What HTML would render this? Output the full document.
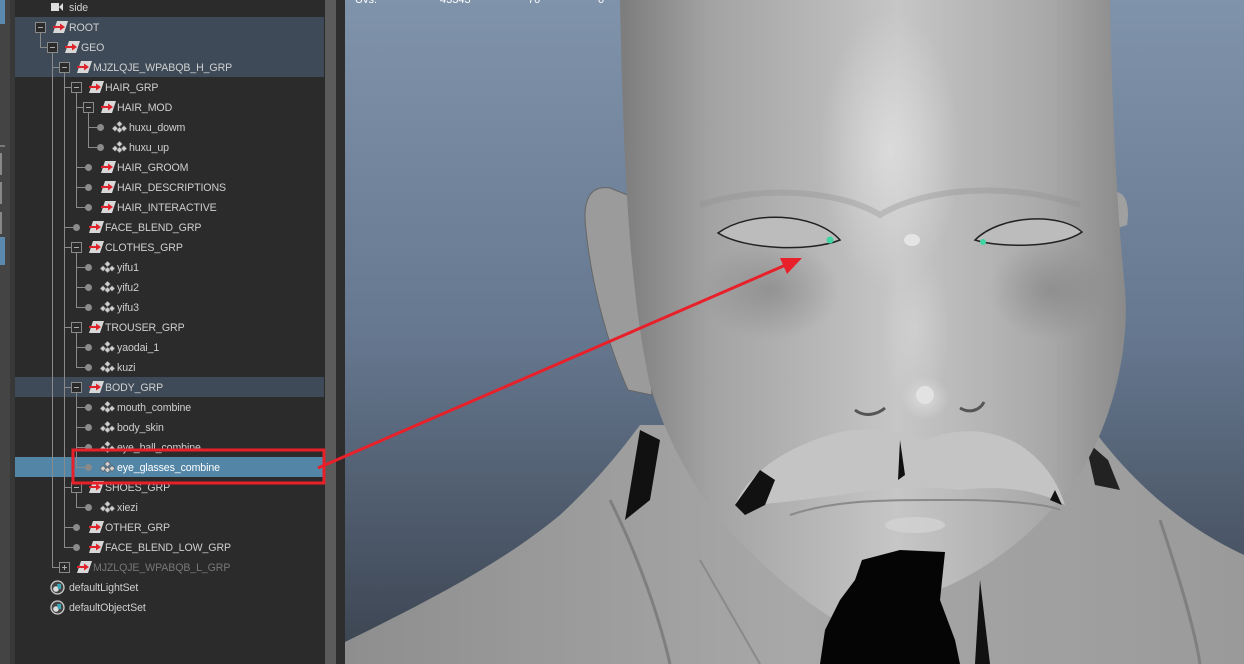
<!DOCTYPE html>
<html><head><meta charset="utf-8">
<style>
*{margin:0;padding:0;box-sizing:border-box}
body{width:1244px;height:664px;overflow:hidden;background:#2b2b2b;font-family:"Liberation Sans",sans-serif;position:relative}
#tb{position:absolute;left:0;top:0;width:10px;height:664px;background:#444}
#tb2{position:absolute;left:10px;top:0;width:5px;height:664px;background:#383838}
#ol{position:absolute;left:15px;top:0;width:310px;height:664px;background:#2b2b2b}
#sb{position:absolute;left:325px;top:0;width:11px;height:664px;background:#5b5b5b}
#sb2{position:absolute;left:336px;top:0;width:9px;height:664px;background:#2e2e2e}
.hl{position:absolute;left:15px;width:309px;background:#3e4a58}
.row{position:absolute;height:20px;line-height:20px;font-size:10.6px;letter-spacing:-0.1px;color:#cfcfcf;white-space:nowrap}
.ln{position:absolute;background:#8a8a8a}
.bx{position:absolute;width:11px;height:11px;border:1px solid #8a8a8a;background:#2b2b2b;z-index:2}
#vp{position:absolute;left:345px;top:0;width:899px;height:664px;overflow:hidden}
</style></head><body>
<div id="tb"></div><div id="tb2"></div>
<div style="position:absolute;left:0;top:0;width:5px;height:24px;background:#5a8ab0"></div>
<div style="position:absolute;left:0;top:145px;width:5px;height:2px;background:#777"></div>
<div style="position:absolute;left:0;top:153px;width:2px;height:22px;background:#888"></div>
<div style="position:absolute;left:0;top:182px;width:2px;height:22px;background:#888"></div>
<div style="position:absolute;left:0;top:212px;width:2px;height:22px;background:#888"></div>
<div style="position:absolute;left:0;top:237px;width:5px;height:28px;background:#5a8ab0"></div>
<div id="ol"></div>
<div class="hl" style="top:17px;height:60px"></div>
<div class="hl" style="top:377px;height:20px"></div>
<div class="hl" style="top:457px;height:20px;background:#5285a6"></div>
<div id="sb"></div><div id="sb2"></div>
<div id="tree"></div>
<div id="vp">
<svg width="899" height="664" viewBox="345 0 899 664" xmlns="http://www.w3.org/2000/svg">
<defs>
<linearGradient id="bg" x1="0" y1="0" x2="0" y2="1"><stop offset="0" stop-color="#7f93ab"/><stop offset="0.5" stop-color="#667890"/><stop offset="1" stop-color="#3b434f"/></linearGradient>
<linearGradient id="fc" x1="0" y1="0" x2="1" y2="0"><stop offset="0" stop-color="#7c7c7c"/><stop offset="0.18" stop-color="#a3a3a3"/><stop offset="0.55" stop-color="#c6c6c6"/><stop offset="0.85" stop-color="#a8a8a8"/><stop offset="1" stop-color="#8a8a8a"/></linearGradient>
<linearGradient id="ct" x1="0" y1="0" x2="1" y2="0"><stop offset="0" stop-color="#8e8e8e"/><stop offset="0.5" stop-color="#a8a8a8"/><stop offset="1" stop-color="#9a9a9a"/></linearGradient>
<radialGradient id="hi" cx="0.5" cy="0.5" r="0.5"><stop offset="0" stop-color="#e0e0e0" stop-opacity="0.8"/><stop offset="1" stop-color="#e0e0e0" stop-opacity="0"/></radialGradient>
<radialGradient id="sh" cx="0.5" cy="0.5" r="0.5"><stop offset="0" stop-color="#777" stop-opacity="0.5"/><stop offset="1" stop-color="#777" stop-opacity="0"/></radialGradient>
</defs>
<rect x="345" y="0" width="899" height="664" fill="url(#bg)"/>
<text x="355" y="3" font-size="11" fill="#fff" font-family="Liberation Sans">Uvs:</text>
<text x="440" y="3" font-size="11" fill="#fff" font-family="Liberation Sans">43343</text>
<text x="528" y="3" font-size="11" fill="#fff" font-family="Liberation Sans">70</text>
<text x="598" y="3" font-size="11" fill="#fff" font-family="Liberation Sans">0</text>
<path d="M345,664 L345,642 C420,605 500,565 560,515 C600,478 625,445 640,425 L1090,425 C1130,480 1180,525 1244,555 L1244,664 Z" fill="url(#ct)"/>
<path d="M640,430 L660,440 L650,500 L625,520 Z" fill="#111"/>
<path d="M1085,440 L1108,460 L1120,490 L1095,485 Z" fill="#222"/>
<path d="M610,500 C640,560 660,620 670,664" stroke="#7f7f7f" stroke-width="3" fill="none"/>
<path d="M1160,520 C1180,580 1195,630 1200,664" stroke="#808080" stroke-width="3" fill="none"/>
<path d="M700,560 L760,664" stroke="#8a8a8a" stroke-width="2" fill="none"/>
<path d="M610,188 C590,185 582,200 586,230 C592,290 610,350 628,390 L652,395 L640,200 Z" fill="#9b9b9b" stroke="#666" stroke-width="1"/>
<path d="M1112,192 C1126,190 1130,205 1127,225 L1112,230 Z" fill="#a0a0a0"/>
<path d="M620,0 L1110,0 C1112,100 1116,200 1125,290 C1130,350 1112,420 1082,470 C1050,520 1000,562 950,585 C915,600 875,612 835,620 C795,595 755,560 718,518 C682,470 662,425 650,385 C632,300 624,200 620,0 Z" fill="url(#fc)"/>
<ellipse cx="890" cy="150" rx="70" ry="140" fill="url(#hi)"/>
<ellipse cx="770" cy="290" rx="70" ry="50" fill="url(#sh)"/>
<ellipse cx="1050" cy="290" rx="60" ry="50" fill="url(#sh)"/>
<path d="M700,205 C760,185 840,190 880,215 C920,190 1000,180 1080,205" stroke="#8e8e8e" stroke-width="6" fill="none" opacity="0.35"/>
<path d="M718,233 C750,210 815,212 840,240 C810,252 745,250 718,233 Z" fill="#bcbcbc" stroke="#222" stroke-width="1.5"/>
<path d="M975,240 C1000,215 1060,212 1082,232 C1060,248 1000,248 975,240 Z" fill="#bcbcbc" stroke="#222" stroke-width="1.5"/>
<circle cx="830" cy="240" r="3.5" fill="#3fd6a2"/>
<circle cx="983" cy="242" r="3" fill="#3fd6a2"/>
<ellipse cx="912" cy="240" rx="8" ry="6" fill="#e4e4e4"/>
<ellipse cx="915" cy="330" rx="35" ry="80" fill="url(#hi)" opacity="0.5"/>
<ellipse cx="925" cy="398" rx="24" ry="22" fill="url(#hi)"/>
<ellipse cx="925" cy="395" rx="9" ry="9" fill="#e2e2e2"/>
<path d="M855,410 C865,418 878,414 885,408" stroke="#555" stroke-width="3" fill="none"/>
<path d="M960,408 C970,414 980,410 984,402" stroke="#555" stroke-width="3" fill="none"/>
<path d="M735,505 C750,470 790,445 840,432 C880,425 910,435 925,440 C950,430 985,425 1020,445 C1050,465 1060,490 1065,505 C1040,490 1000,485 960,490 C920,485 880,488 840,495 C800,500 770,505 735,505 Z" fill="#c4c4c4"/>
<path d="M735,505 L760,470 L775,480 L765,505 L745,515 Z" fill="#111"/>
<path d="M900,440 L905,475 L898,480 Z" fill="#111"/>
<path d="M1055,490 L1062,505 L1050,500 Z" fill="#111"/>
<path d="M790,515 C840,498 900,500 960,500 C1010,500 1050,505 1060,510" stroke="#8a8a8a" stroke-width="2" fill="none"/>
<ellipse cx="915" cy="525" rx="30" ry="8" fill="#d4d4d4" opacity="0.7"/>
<path d="M862,560 L900,550 L945,552 L940,600 L955,640 L960,664 L820,664 L825,630 L840,600 L855,580 Z" fill="#050505"/>
<path d="M980,580 L990,664 L975,664 Z" fill="#111"/>
</svg>
</div>
<svg style="position:absolute;left:0;top:0;z-index:5" width="1244" height="664">
<line x1="318" y1="468" x2="788" y2="264" stroke="#e8202a" stroke-width="3"/>
<polygon points="802,258 780,258 787,274" fill="#e8202a"/>
<rect x="73" y="450" width="251" height="33" fill="none" stroke="#e8202a" stroke-width="3"/>
</svg>
<script>
(function(){
var rows=[
[0,'cam','side'],[0,'g','ROOT',1],[1,'g','GEO',1],[2,'g','MJZLQJE_WPABQB_H_GRP',1],[3,'g','HAIR_GRP',1],[4,'g','HAIR_MOD',1],
[5,'m','huxu_dowm'],[5,'m','huxu_up'],[4,'g','HAIR_GROOM'],[4,'g','HAIR_DESCRIPTIONS'],[4,'g','HAIR_INTERACTIVE'],
[3,'g','FACE_BLEND_GRP'],[3,'g','CLOTHES_GRP',1],[4,'m','yifu1'],[4,'m','yifu2'],[4,'m','yifu3'],
[3,'g','TROUSER_GRP',1],[4,'m','yaodai_1'],[4,'m','kuzi'],[3,'g','BODY_GRP',1],
[4,'m','mouth_combine'],[4,'m','body_skin'],[4,'m','eye_ball_combine'],[4,'m','eye_glasses_combine'],
[3,'g','SHOES_GRP',1],[4,'m','xiezi'],[3,'g','OTHER_GRP'],[3,'g','FACE_BLEND_LOW_GRP'],
[2,'g','MJZLQJE_WPABQB_L_GRP',2],[0,'s','defaultLightSet'],[0,'s','defaultObjectSet']];
var h='';
var G='<svg width="15" height="12" style="position:absolute;top:4px"><polygon points="4,0 15,0 11,12 0,12" fill="#d8d8d8"/><line x1="0" y1="6" x2="9" y2="6" stroke="#e0232b" stroke-width="2"/><polygon points="12,6 7,2.5 7,9.5" fill="#e0232b"/></svg>';
var M='<svg width="15" height="12" style="position:absolute;top:4px"><g fill="#cfcfcf" stroke="#555" stroke-width="0.6"><polygon points="7.5,0 10.5,3 7.5,6 4.5,3"/><polygon points="3,4.5 6,7.5 3,10.5 0,7.5"/><polygon points="12,4.5 15,7.5 12,10.5 9,7.5"/><polygon points="7.5,6 10.5,9 7.5,12 4.5,9"/></g></svg>';
var S='<svg width="15" height="15" style="position:absolute;top:3px"><circle cx="7.5" cy="7.5" r="6.5" fill="#444" stroke="#ccc" stroke-width="1.3"/><circle cx="6" cy="9" r="2.8" fill="#ddd"/><path d="M7,4 L11,4 L11,9 L8,9 Z" fill="#3aa7b8"/></svg>';
var C='<svg width="13" height="10" style="position:absolute;top:5px"><rect x="0" y="1" width="8" height="8" fill="#ddd"/><polygon points="8,5 12,1 12,9" fill="#ddd"/></svg>';
function ln(x,y,w,hh){h+='<div class="ln" style="left:'+x+'px;top:'+y+'px;width:'+w+'px;height:'+hh+'px"></div>';}
for(var i=0;i<rows.length;i++){
 var r=rows[i],L=r[0],tx=69+12*L,cy=20*i+7,ry=20*i-2;
 var cx=tx-29;
 if(i>=2&&i<=28){
  var j;
  for(j=i-1;j>=0;j--){if(rows[j][0]==L-1)break;}
  var px=69+12*(L-1)-29, py=20*j+7;
  ln(px,py,1,cy-py+1);
  ln(px,cy,cx-px,1);
 }
 if(r[3]==1||r[3]==2){
  h+='<div class="bx" style="left:'+(cx-5)+'px;top:'+(cy-5)+'px"><div style="position:absolute;left:2px;top:4px;width:5px;height:1px;background:#aaa"></div>'+(r[3]==2?'<div style="position:absolute;left:4px;top:2px;width:1px;height:5px;background:#aaa"></div>':'')+'</div>';
 } else if(i>=2&&i<=28){
  h+='<div style="position:absolute;left:'+(cx-3)+'px;top:'+(cy-3)+'px;width:7px;height:7px;border-radius:50%;background:#8a8a8a"></div>';
 }
 var ic=r[1]=='g'?G:r[1]=='m'?M:r[1]=='s'?S:C;
 var ix=r[1]=='cam'?tx-18:r[1]=='s'?tx-19:(r[1]=='m'?tx-17:tx-16);
 h+='<div class="row" style="left:'+ix+'px;top:'+(ry-1)+'px;width:16px">'+ic+'</div>';
 var col=(i==23)?'#fff':(r[3]==2?'#777':'#cfcfcf');
 h+='<div class="row" style="left:'+tx+'px;top:'+ry+'px;color:'+col+'">'+r[2]+'</div>';
}
document.getElementById('tree').innerHTML=h;
})();
</script>
</body></html>
